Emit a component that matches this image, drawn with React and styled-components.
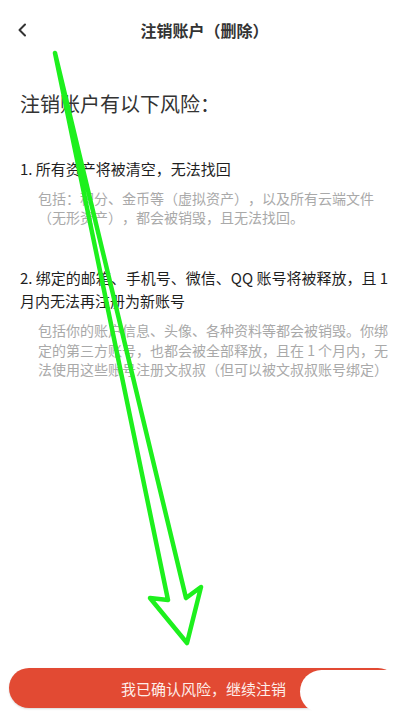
import React from "react"
import styled, {createGlobalStyle} from "styled-components"

const GlobalStyle = createGlobalStyle`
    html, body {
        margin: 0;
        padding: 0;
        background: #fff;
    }
    body {
        font-family: "Noto Sans CJK SC", "Noto Sans", sans-serif;
        color: #333;
        text-spacing-trim: space-all;
    }
`

const Page = styled.div`
    position: relative;
    display: flex;
    flex-direction: column;
    width: 417px;
    height: 727px;
    overflow: hidden;
    background: #fff;
`

const Header = styled.header`
    position: relative;
    display: flex;
    align-items: center;
    justify-content: center;
    height: 60px;
    padding-right: 8px;
`

const BackButton = styled.button`
    position: absolute;
    left: 12px;
    top: 19px;
    width: 20px;
    height: 22px;
    padding: 0;
    border: none;
    background: none;
    display: flex;
    align-items: center;
    justify-content: center;
    color: #333;
`

const Title = styled.h1`
    margin: 0;
    font-size: 16px;
    font-weight: 700;
    line-height: 22px;
    color: #333;
`

const Content = styled.main`
    flex: 1;
    padding: 0 20px;
`

const Heading = styled.h2`
    margin: 30px 0 0;
    font-size: 20px;
    font-weight: 400;
    line-height: 28px;
    color: #333;
`

const Risk = styled.section`
    margin-top: 38.5px;
`

const RiskTitle = styled.h3`
    margin: 0;
    font-size: 15px;
    font-weight: 400;
    line-height: 23px;
    color: #1f1f1f;
`

const RiskDesc = styled.p`
    margin: 9px 0 0 18px;
    font-size: 14px;
    line-height: 19.5px;
    color: #a9a9a9;
`

const Footer = styled.footer`
    position: relative;
    padding: 0 19px 19px 9px;
`

const ConfirmButton = styled.button`
    display: block;
    width: 100%;
    height: 40px;
    border: none;
    border-radius: 20px;
    background: #e24a33;
    box-shadow: 0 1px 2px rgba(0, 0, 0, 0.15);
    font-family: inherit;
    font-size: 15px;
    color: #fdeeea;
    text-spacing-trim: space-all;
`

const Redaction = styled.div`
    position: absolute;
    left: 300px;
    right: 0;
    top: 2px;
    height: 43px;
    background: #fff;
    border-radius: 22px 0 0 22px;
`

const Annotation = styled.svg`
    position: absolute;
    left: 0;
    top: 0;
    pointer-events: none;
`

const risks = [
    {
        title: "1. 所有资产将被清空，无法找回",
        desc: "包括：积分、金币等（虚拟资产），以及所有云端文件（无形资产），都会被销毁，且无法找回。"
    },
    {
        title: "2. 绑定的邮箱、手机号、微信、QQ 账号将被释放，且 1 月内无法再注册为新账号",
        desc: "包括你的账户信息、头像、各种资料等都会被销毁。你绑定的第三方账号，也都会被全部释放，且在 1 个月内，无法使用这些账号注册文叔叔（但可以被文叔叔账号绑定）"
    }
]

export default function App() {
    return (
        <Page>
            <GlobalStyle />
            <Header>
                <BackButton aria-label="返回">
                    <svg width="10" height="14" viewBox="0 0 10 14">
                        <path d="M8 1.5 L2.5 7 L8 12.5" fill="none" stroke="#333" strokeWidth="2" strokeLinecap="round" strokeLinejoin="round" />
                    </svg>
                </BackButton>
                <Title>注销账户（删除）</Title>
            </Header>
            <Content>
                <Heading>注销账户有以下风险：</Heading>
                {risks.map(risk => (
                    <Risk key={risk.title}>
                        <RiskTitle>{risk.title}</RiskTitle>
                        <RiskDesc>{risk.desc}</RiskDesc>
                    </Risk>
                ))}
            </Content>
            <Footer>
                <ConfirmButton>我已确认风险，继续注销</ConfirmButton>
                <Redaction />
            </Footer>
            <Annotation width="417" height="727" viewBox="0 0 417 727">
                <path
                    d="M55 53 L168 600 L150 598 L187 643 L201 587 L186 598 Z"
                    fill="none"
                    stroke="#1df01d"
                    strokeWidth="4.5"
                    strokeLinejoin="round"
                    strokeLinecap="round"
                />
            </Annotation>
        </Page>
    )
}
